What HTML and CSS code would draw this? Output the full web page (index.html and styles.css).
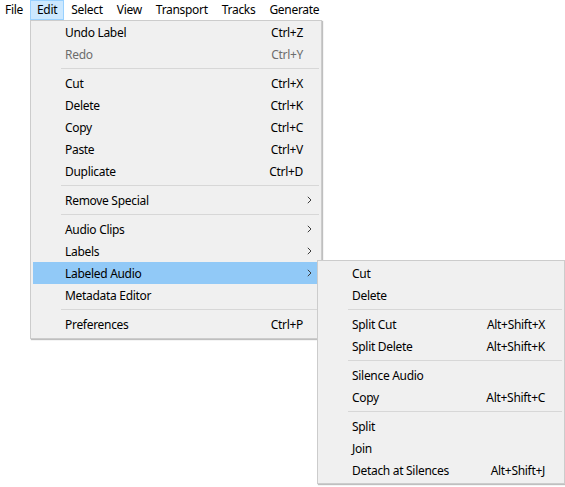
FILE: index.html
```html
<!DOCTYPE html>
<html>
<head>
<meta charset="utf-8">
<link rel="stylesheet" href="styles.css">
</head>
<body>
<div class="menubar">
  <span class="mb-item first">File</span>
  <span class="mb-item active">Edit</span>
  <span class="mb-item">Select</span>
  <span class="mb-item">View</span>
  <span class="mb-item">Transport</span>
  <span class="mb-item">Tracks</span>
  <span class="mb-item">Generate</span>
</div>

<div class="menu edit-menu">
  <div class="row"><span class="label">Undo Label</span><span class="key">Ctrl+Z</span><span class="trail"></span></div>
  <div class="row disabled"><span class="label">Redo</span><span class="key">Ctrl+Y</span><span class="trail"></span></div>
  <div class="sep"></div>
  <div class="row"><span class="label">Cut</span><span class="key">Ctrl+X</span><span class="trail"></span></div>
  <div class="row"><span class="label">Delete</span><span class="key">Ctrl+K</span><span class="trail"></span></div>
  <div class="row"><span class="label">Copy</span><span class="key">Ctrl+C</span><span class="trail"></span></div>
  <div class="row"><span class="label">Paste</span><span class="key">Ctrl+V</span><span class="trail"></span></div>
  <div class="row"><span class="label">Duplicate</span><span class="key">Ctrl+D</span><span class="trail"></span></div>
  <div class="sep"></div>
  <div class="row"><span class="label">Remove Special</span><span class="trail"><svg class="chev" width="5" height="8" viewBox="0 0 5 8"><path d="M0.8 0.8 L4 4 L0.8 7.2" fill="none" stroke="#3c3c3c" stroke-width="1"/></svg></span></div>
  <div class="sep"></div>
  <div class="row"><span class="label">Audio Clips</span><span class="trail"><svg class="chev" width="5" height="8" viewBox="0 0 5 8"><path d="M0.8 0.8 L4 4 L0.8 7.2" fill="none" stroke="#3c3c3c" stroke-width="1"/></svg></span></div>
  <div class="row"><span class="label">Labels</span><span class="trail"><svg class="chev" width="5" height="8" viewBox="0 0 5 8"><path d="M0.8 0.8 L4 4 L0.8 7.2" fill="none" stroke="#3c3c3c" stroke-width="1"/></svg></span></div>
  <div class="row hot"><span class="label">Labeled Audio</span><span class="trail"><svg class="chev" width="5" height="8" viewBox="0 0 5 8"><path d="M0.8 0.8 L4 4 L0.8 7.2" fill="none" stroke="#3c3c3c" stroke-width="1"/></svg></span></div>
  <div class="row"><span class="label">Metadata Editor</span><span class="trail"></span></div>
  <div class="sep"></div>
  <div class="row"><span class="label">Preferences</span><span class="key">Ctrl+P</span><span class="trail"></span></div>
</div>

<div class="menu sub-menu">
  <div class="row"><span class="label">Cut</span><span class="trail"></span></div>
  <div class="row"><span class="label">Delete</span><span class="trail"></span></div>
  <div class="sep"></div>
  <div class="row"><span class="label">Split Cut</span><span class="key">Alt+Shift+X</span><span class="trail"></span></div>
  <div class="row"><span class="label">Split Delete</span><span class="key">Alt+Shift+K</span><span class="trail"></span></div>
  <div class="sep"></div>
  <div class="row"><span class="label">Silence Audio</span><span class="trail"></span></div>
  <div class="row"><span class="label">Copy</span><span class="key">Alt+Shift+C</span><span class="trail"></span></div>
  <div class="sep"></div>
  <div class="row"><span class="label">Split</span><span class="trail"></span></div>
  <div class="row"><span class="label">Join</span><span class="trail"></span></div>
  <div class="row"><span class="label">Detach at Silences</span><span class="key">Alt+Shift+J</span><span class="trail"></span></div>
</div>
</body>
</html>
```
FILE: styles.css
```css
html, body {
  margin: 0;
  padding: 0;
  background: #ffffff;
}
body {
  font-family: "Noto Sans", "Open Sans", sans-serif;
  font-size: 12px;
  letter-spacing: -0.3px;
  color: #000000;
  width: 565px;
  height: 487px;
  overflow: hidden;
  position: relative;
}
.menubar {
  display: flex;
  height: 20px;
  padding-left: 0;
}
.mb-item {
  box-sizing: border-box;
  height: 20px;
  line-height: 18px;
  padding: 0 6px;
  border: 1px solid transparent;
  white-space: nowrap;
}
.mb-item.first {
  padding-left: 4px;
}
.mb-item.active {
  background: #cce8ff;
  border-color: #99d1ff;
}
.menu {
  position: absolute;
  box-sizing: border-box;
  background: #f0f0f0;
  border: 1px solid #cccccc;
  box-shadow: 1px 1px 1px rgba(0, 0, 0, 0.25);
  display: flex;
  flex-direction: column;
}
.edit-menu {
  left: 30px;
  top: 20px;
  width: 292px;
  padding: 0 2px 3px 2px;
}
.sub-menu {
  left: 317px;
  top: 260px;
  width: 248px;
  padding: 1px 2px 2px 2px;
}
.row {
  display: flex;
  align-items: center;
  height: 22px;
  padding-left: 32px;
  white-space: nowrap;
}
.row .label {
  flex: 1;
}
.row .key {
  text-align: right;
}
.row .trail {
  width: 16px;
  display: flex;
  align-items: center;
}
.sub-menu .row .trail {
  width: 17px;
}
.chev {
  margin-left: 4px;
}
.row.disabled {
  color: #6d6d6d;
}
.row.hot {
  background: #91c9f7;
}
.sep {
  height: 1px;
  margin: 3px 0 3px 28px;
  background: #d7d7d7;
}
```
